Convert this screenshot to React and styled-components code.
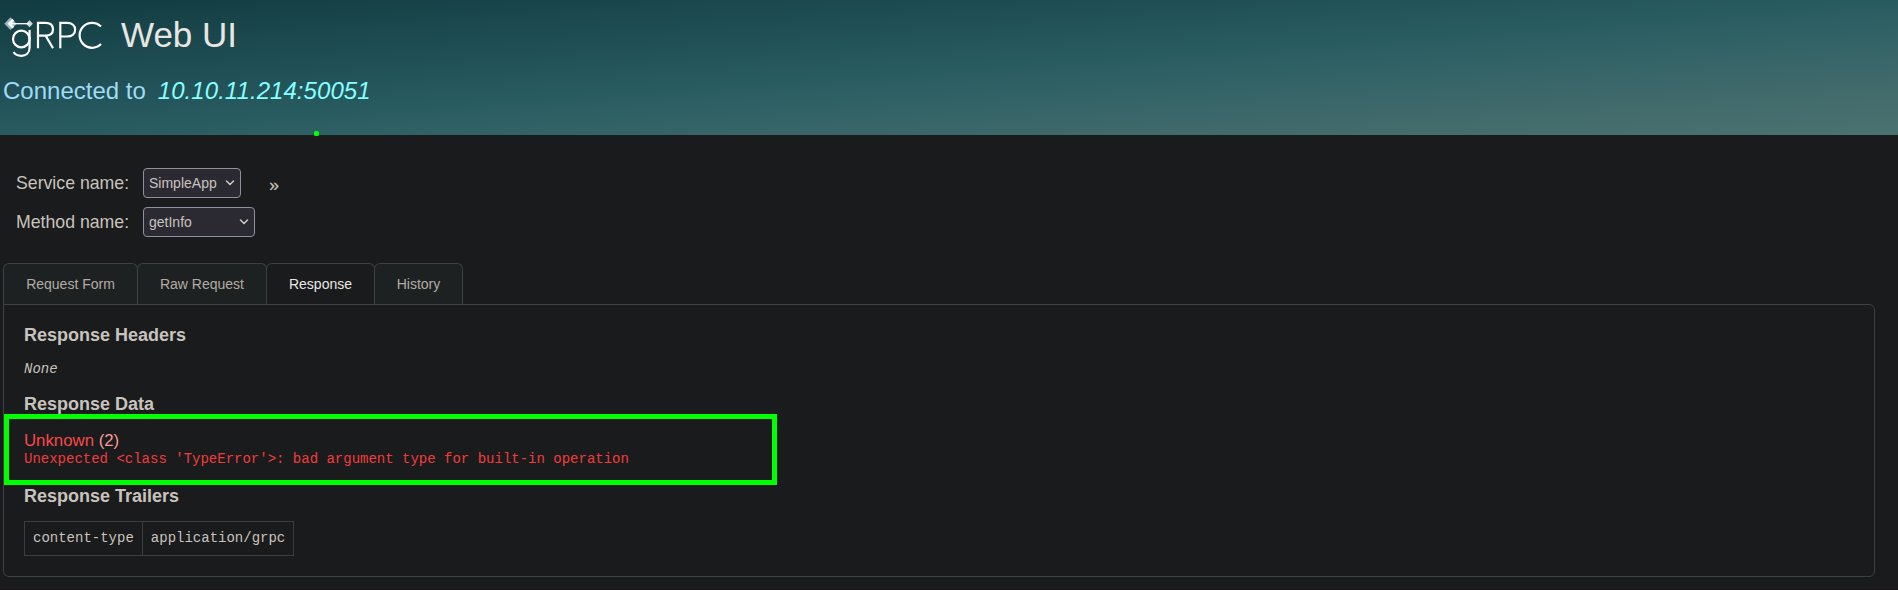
import React from 'react';
import styled, { createGlobalStyle } from 'styled-components';

const Global = createGlobalStyle`
  * { box-sizing: border-box; }
  body { margin: 0; background: #1a1b1c; color: #c8c3bc; font-family: "Liberation Sans", Arial, sans-serif; font-size: 14px; overflow: hidden; }
`;
const Page = styled.div`position: relative; height: 590px; display: flex; flex-direction: column; border-bottom: 1px solid #1e1418;`;
const Header = styled.header`
  height: 135px; flex: none; padding: 12px 3px 0;
  background: linear-gradient(to bottom right, #113b41 0%, #285b60 50%, #336367 64%, #40696b 80%, #4b7270 100%);
`;
const Brand = styled.h1`display: flex; align-items: flex-start; gap: 17px; margin: 0; height: 50px; font-weight: 400; font-size: 35px; line-height: 46px; color: #e8e6e3;`;
const Logo = styled.svg`display: block; width: 101px; height: 50px; fill: none; stroke: #fff;`;
const Connection = styled.h2`display: flex; gap: 12px; margin: 15px 0 0; font-weight: 400; font-size: 24px; line-height: 28px; color: #9fdcf7;`;
const Target = styled.em`color: #85ffff; letter-spacing: 0.06px;`;
const Form = styled.section`display: flex; flex-direction: column; gap: 9px; padding: 33px 0 0 16px;`;
const Field = styled.div`display: flex; align-items: center; height: 30px;`;
const Label = styled.span`width: 127px; font-size: 17.7px;`;
const Select = styled.button`
  width: ${p => p.$width}px; height: 30px; padding: 0 5px; display: flex; align-items: center; justify-content: space-between;
  font: inherit; color: #c8c3bc; background: #2b2a33; border: 1px solid #8f8f9d; border-radius: 4px;
`;
const More = styled.span`margin: 4px 0 0 28px; font-size: 18px; line-height: 18px; -webkit-text-stroke: 0.2px currentColor;`;
const Tabs = styled.nav`display: flex; margin: 26px 0 0 3px; height: 41px;`;
const Tab = styled.div`
  width: ${p => p.$width}px; margin-right: -1px; display: flex; align-items: center; justify-content: center;
  border: 1px solid #3c4142; border-bottom: 0; border-radius: 6px 6px 0 0;
  background: ${p => (p.$active ? '#1a1b1c' : '#1e2122')}; color: ${p => (p.$active ? '#e8e6e3' : '#b2aca2')};
`;
const Panel = styled.main`width: 1872px; height: 273px; margin-left: 3px; padding: 20px; border: 1px solid #3e4244; border-radius: 0 6px 6px 6px;`;
const Heading = styled.h3`margin: 0; font-size: 18px; line-height: 20px;`;
const None = styled.p`margin: 16px 0; font: italic 14px/17px "Liberation Mono", monospace;`;
const Failure = styled.div`margin: 17px 0 20px; height: 35px; color: #f23c3c;`;
const Status = styled.div`height: 20px; font-size: 16.8px; line-height: 19px; color: #f94848;`;
const Code = styled.span`color: #f99a94;`;
const Message = styled.div`font: 14px/16px "Liberation Mono", monospace;`;
const Table = styled.table`margin-top: 15px; border-collapse: collapse; font: 14px/18px "Liberation Mono", monospace;`;
const Cell = styled.td`height: 34px; padding: 0 8px 1px; border: 1px solid #3b3e40;`;
const Highlight = styled.div`position: absolute; left: 4px; top: 414px; width: 773px; height: 71px; border: 5px solid #0f0;`;
const Dot = styled.i`position: absolute; left: 313.5px; top: 130.5px; width: 5px; height: 5px; border-radius: 1.5px; background: #0f0;`;

const Chevron = () => (
  <svg width="10" height="6" viewBox="0 0 10 6" fill="none" stroke="#d0ccc7" strokeWidth="1.5" strokeLinecap="round"><path d="M1.5 1l3.5 3.5L8.5 1" /></svg>
);

const GrpcLogo = () => (
  <Logo viewBox="3 12 101 50" aria-label="gRPC">
    <path d="M10.5 17.3l6.2 6.4-6.2 6.4-6.2-6.4z" fill="#9db6b9" stroke="none" />
    <path d="M29.5 20.2l3.4 3.5-3.4 3.5-3.4-3.5z" fill="#cbdadb" stroke="none" />
    <path d="M13.3 19.8l-4 3.9 4 4" strokeWidth="2.6" />
    <path d="M9 23.7h20" strokeWidth="1.3" />
    <g strokeWidth="2.2">
      <circle cx="21.3" cy="39" r="8.3" />
      <path d="M29.6 30v17.5c0 5.4-3.7 8.3-8.2 8.3-3.5 0-6.3-1.3-7.8-3.8" />
      <path d="M38 48.2V22.9h7.2c5.2 0 7.8 2.5 7.8 6.3s-2.6 6.4-7.8 6.4H38M45.6 35.6L53 48.2" />
      <path d="M60.3 48.2V22.9h6.6c5.3 0 8.2 2.8 8.2 6.8s-2.9 6.8-8.2 6.8h-6.6" />
      <path d="M101 26.5a12.5 12.5 0 1 0 0 17.6" />
    </g>
  </Logo>
);

const tabs = [['Request Form', 135], ['Raw Request', 130], ['Response', 109], ['History', 89]];

export default function App() {
  return (
    <Page>
      <Global />
      <Header>
        <Brand><GrpcLogo />Web UI</Brand>
        <Connection>Connected to <Target>10.10.11.214:50051</Target></Connection>
      </Header>
      <Form>
        <Field><Label>Service name:</Label><Select $width={98}>SimpleApp<Chevron /></Select><More>»</More></Field>
        <Field><Label>Method name:</Label><Select $width={112}>getInfo<Chevron /></Select></Field>
      </Form>
      <Tabs>{tabs.map(([name, width]) => <Tab key={name} $width={width} $active={name === 'Response'}>{name}</Tab>)}</Tabs>
      <Panel>
        <Heading>Response Headers</Heading>
        <None>None</None>
        <Heading>Response Data</Heading>
        <Failure>
          <Status>Unknown <Code>(2)</Code></Status>
          <Message>Unexpected &lt;class 'TypeError'&gt;: bad argument type for built-in operation</Message>
        </Failure>
        <Heading>Response Trailers</Heading>
        <Table><tbody><tr><Cell>content-type</Cell><Cell>application/grpc</Cell></tr></tbody></Table>
      </Panel>
      <Highlight />
      <Dot />
    </Page>
  );
}
